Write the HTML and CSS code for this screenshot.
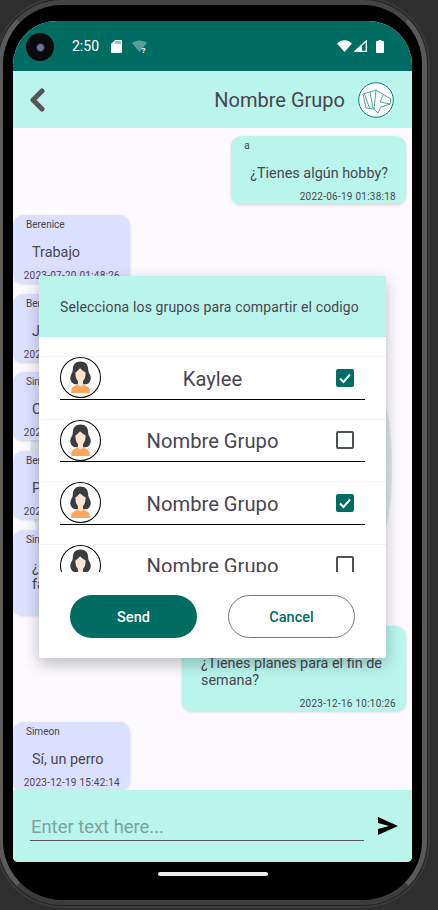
FILE: index.html
```html
<!DOCTYPE html>
<html>
<head>
  <title>Nombre Grupo</title>
  <link rel="stylesheet" href="styles.css">
</head>
<body>
  <svg class="defs" width="0" height="0">
    <symbol id="avatar" viewBox="0 0 40 40">
      <circle cx="20" cy="20" r="19.5" fill="#fff" stroke="#000" stroke-width="1"/>
      <path d="M11 35v-3c0-2 3-4 6-5h6c3 1 6 3 6 5v3z" fill="#fba65e"/>
      <path d="M20 4.500c-5 0-7.500 3-7.500 8 0 3-2.500 5-2.500 8s2.500 6 4.500 6h11c2 0 4.500-2.500 4.500-6s-2.500-5-2.500-8c0-5-2.500-8-7.500-8z" fill="#3b3b42"/>
      <path d="M15 15c2-1 3.500-3 4.500-4 2 2 3.500 3 5.500 4 0 5-1.500 9-5 9s-5-4-5-9z" fill="#fde4d0"/>
      <path d="M17.500 23h5v4l-2.500 2-2.500-2z" fill="#fde4d0"/>
    </symbol>
  </svg>

  <div class="phone">
    <div class="screen">
      <div class="status-bar">
        <div class="camera"><div class="lens"></div></div>
        <span class="time">2:50</span>
        <svg class="sd-icon" width="11" height="13" viewBox="0 0 11 13"><path d="M4 0h6a1 1 0 0 1 1 1v11a1 1 0 0 1-1 1H1a1 1 0 0 1-1-1V4z" fill="#fff"/><path d="M5 1v3M7 1v3M9 1v3" stroke="#006c62" stroke-width=".8"/></svg>
        <svg class="wifi-q" width="15" height="13" viewBox="0 0 15 13"><path d="M0 3c4-3.500 11-3.500 15 0l-7.500 9z" fill="#fff" opacity=".35"/><text x="9.500" y="13" class="wifi-q-mark">?</text></svg>
        <div class="status-right">
          <svg width="15" height="12" viewBox="0 0 15 12"><path d="M0 3.500c4-4.500 11-4.500 15 0l-7.500 8.500z" fill="#fff"/></svg>
          <svg width="13" height="12" viewBox="0 0 13 12"><path d="M12.300 1v10.300H1z" fill="none" stroke="#fff" stroke-width="1.300"/><path d="M8 11.500V5L1 11.500z" fill="#fff"/></svg>
          <svg class="battery" width="8" height="13" viewBox="0 0 8 13"><path d="M2.500 0h3v1H7a1 1 0 0 1 1 1v10a1 1 0 0 1-1 1H1a1 1 0 0 1-1-1V2a1 1 0 0 1 1-1h1.500z" fill="#fff"/></svg>
        </div>
      </div>

      <div class="app-header">
        <svg class="back" width="17" height="24" viewBox="0 0 17 24"><path d="M13 3 4 12l9 9" fill="none" stroke="#555" stroke-width="5" stroke-linecap="round" stroke-linejoin="round"/></svg>
        <span class="group-title">Nombre Grupo</span>
        <svg class="group-icon" width="36" height="36" viewBox="0 0 36 36">
          <circle cx="18" cy="18" r="17.300" fill="#fff" stroke="#0b7a70" stroke-width="1"/>
          <path d="M5 12 18 8l15 9-1 5-9 3-3 6-4-4-8-1zM6.500 12l5 14M18 8l-2 19M12 10l3 16M25 13l-3 7 10 2" fill="none" stroke="#2a8c82" stroke-width=".8"/>
        </svg>
      </div>

      <div class="messages">
        <div class="watermark"></div>

        <div class="bubble mine">
          <div class="sender">a</div>
          <div class="text">¿Tienes algún hobby?</div>
          <div class="date">2022-06-19 01:38:18</div>
        </div>
        <div class="bubble theirs">
          <div class="sender">Berenice</div>
          <div class="text">Trabajo</div>
          <div class="date">2023-07-20 01:48:26</div>
        </div>
        <div class="bubble theirs">
          <div class="sender">Berenice</div>
          <div class="text">Jugar</div>
          <div class="date">2023-07-20 01:50:11</div>
        </div>
        <div class="bubble theirs">
          <div class="sender">Simeon</div>
          <div class="text">Correr</div>
          <div class="date">2023-07-21 09:12:40</div>
        </div>
        <div class="bubble theirs">
          <div class="sender">Berenice</div>
          <div class="text">Pintar</div>
          <div class="date">2023-07-21 09:15:02</div>
        </div>
        <div class="bubble theirs wide">
          <div class="sender">Simeon</div>
          <div class="text">¿Tienes alguna mascota favorita?</div>
          <div class="date">2023-12-15 18:20:33</div>
        </div>
        <div class="bubble mine">
          <div class="text narrow">¿Tienes planes para el fin de semana?</div>
          <div class="date">2023-12-16 10:10:26</div>
        </div>
        <div class="bubble theirs">
          <div class="sender">Simeon</div>
          <div class="text">Sí, un perro</div>
          <div class="date">2023-12-19 15:42:14</div>
        </div>
      </div>

      <div class="composer">
        <div class="input">Enter text here...</div>
        <svg class="send-icon" width="20" height="18" viewBox="0 0 20 18"><path d="M0 0 20 9 0 18v-6l11-3L0 6z" fill="#000"/></svg>
      </div>

      <div class="dialog">
        <div class="dialog-title">Selecciona los grupos para compartir el codigo</div>
        <div class="group-list">
          <div class="group-row">
            <div class="group-inner">
              <svg class="avatar"><use href="#avatar"/></svg>
              <span class="group-name">Kaylee</span>
              <span class="check on"><svg width="14" height="14" viewBox="0 0 14 14"><path d="M2 7.500 5.500 11 12 3.500" fill="none" stroke="#fff" stroke-width="2"/></svg></span>
            </div>
          </div>
          <div class="group-row">
            <div class="group-inner">
              <svg class="avatar"><use href="#avatar"/></svg>
              <span class="group-name">Nombre Grupo</span>
              <span class="check"></span>
            </div>
          </div>
          <div class="group-row">
            <div class="group-inner">
              <svg class="avatar"><use href="#avatar"/></svg>
              <span class="group-name">Nombre Grupo</span>
              <span class="check on"><svg width="14" height="14" viewBox="0 0 14 14"><path d="M2 7.500 5.500 11 12 3.500" fill="none" stroke="#fff" stroke-width="2"/></svg></span>
            </div>
          </div>
          <div class="group-row">
            <div class="group-inner">
              <svg class="avatar"><use href="#avatar"/></svg>
              <span class="group-name">Nombre Grupo</span>
              <span class="check"></span>
            </div>
          </div>
        </div>
        <div class="dialog-actions">
          <button class="btn btn-send">Send</button>
          <button class="btn btn-cancel">Cancel</button>
        </div>
      </div>
    </div>
    <div class="home-bar"></div>
  </div>
</body>
</html>
```

FILE: styles.css
```css
html, body {
  height: 910px;
  overflow: hidden;
}

body {
  margin: 0;
  background-color: #2e2e2e;
  font-family: Roboto, "Liberation Sans", sans-serif;
  color: #49454f;
}

.defs {
  display: block;
  height: 0;
}

.phone {
  box-sizing: border-box;
  width: 429px;
  height: 905px;
  margin-left: -2px;
  padding: 16px 10px 0;
  background-color: #000;
  border: 5px solid #5a5a5a;
  border-top-color: #444;
  border-bottom-color: #3c3c3c;
  border-radius: 64px;
  box-shadow: 0 0 0 1px #222, 0 0 0 3px #3a3a3a;
}

.screen {
  position: relative;
  display: flex;
  flex-direction: column;
  height: 841px;
  overflow: hidden;
  background-color: #fcfaff;
  border-radius: 44px 44px 5px 5px;
}

/* status bar */
.status-bar {
  display: flex;
  align-items: center;
  flex: none;
  height: 50px;
  padding: 0 28px 0 13px;
  background-color: #006c62;
  color: #fff;
}

.camera {
  display: flex;
  align-items: center;
  justify-content: center;
  width: 28px;
  height: 28px;
  margin-top: 2px;
  background-color: #0a0a0e;
  border-radius: 50%;
}

.lens {
  width: 7px;
  height: 7px;
  background-color: #6f7595;
  border: 1px solid #23263a;
  border-radius: 50%;
}

.time {
  margin-left: 18px;
  font-size: 14px;
}

.sd-icon {
  margin-left: 12px;
}

.wifi-q {
  margin-left: 10px;
  overflow: visible;
}

.wifi-q-mark {
  font-size: 8px;
  font-weight: 700;
  fill: #fff;
}

.status-right {
  display: flex;
  align-items: center;
  gap: 2px;
  margin-left: auto;
}

.battery {
  margin-left: 7px;
}

/* header */
.app-header {
  display: flex;
  align-items: center;
  flex: none;
  height: 57px;
  padding: 0 18px 0 16px;
  background-color: #baf5ec;
}

.back {
  margin-right: auto;
}

.group-title {
  margin-right: 13px;
  font-size: 20px;
}

/* messages */
.messages {
  position: relative;
  display: flex;
  flex-direction: column;
  align-items: flex-start;
  flex: 1;
  gap: 10.8px;
  min-height: 0;
  padding-top: 8px;
  overflow: hidden;
}

.watermark {
  position: absolute;
  top: 266px;
  left: 17px;
  width: 362px;
  height: 146px;
  background-color: #dde7ea;
  border-radius: 14px / 70px;
}

.bubble {
  position: relative;
  flex: none;
  padding: 4px 0 1px;
  border-radius: 11px 11px 9px 9px;
  box-shadow: 0 1px 3px rgba(0, 0, 0, 0.16);
}

.mine {
  align-self: flex-end;
  margin-right: 6px;
  background-color: #baf5ec;
}

.theirs {
  width: 117px;
  background-color: #dce0ff;
}

.theirs.wide {
  width: 200px;
}

.sender {
  height: 12px;
  padding-left: 13px;
  font-size: 10px;
  line-height: 12px;
}

.text {
  margin: 13px 18px 9px 19px;
  font-size: 14.400px;
  line-height: 17px;
  white-space: nowrap;
}

.wide .text {
  width: 170px;
  white-space: normal;
}

.text.narrow {
  width: 187px;
  margin-top: 25px;
  white-space: normal;
}

.date {
  height: 12px;
  padding: 0 10px;
  font-size: 10px;
  line-height: 12px;
  letter-spacing: 0.25px;
  text-align: right;
  white-space: nowrap;
}

/* composer */
.composer {
  display: flex;
  align-items: center;
  flex: none;
  height: 72px;
  padding: 0 14px 0 17px;
  background-color: #baf5ec;
}

.input {
  box-sizing: border-box;
  width: 334px;
  height: 28px;
  margin-top: 1px;
  padding-left: 1px;
  border-bottom: 1px solid #555;
  color: #7fa39d;
  font-size: 18.400px;
  line-height: 28px;
}

.send-icon {
  margin-left: 14px;
}

/* dialog */
.dialog {
  position: absolute;
  top: 255px;
  left: 26px;
  display: flex;
  flex-direction: column;
  width: 347px;
  height: 382px;
  background-color: #fff;
  border-radius: 2px;
  box-shadow: 0 6px 16px rgba(0, 0, 0, 0.25);
}

.dialog-title {
  flex: none;
  height: 61px;
  padding-left: 21px;
  background-color: #baf5ec;
  font-size: 14px;
  line-height: 62px;
  letter-spacing: 0.14px;
  white-space: nowrap;
}

.group-list {
  flex: none;
  height: 235px;
  padding-top: 19px;
  box-sizing: border-box;
  overflow: hidden;
}

.group-row {
  box-sizing: border-box;
  height: 62.500px;
  border-top: 1px solid #f3f3f3;
}

.group-inner {
  display: flex;
  align-items: center;
  width: 305px;
  height: 42.500px;
  margin-left: 21px;
  box-sizing: border-box;
  border-bottom: 1.500px solid #000;
}

.avatar {
  flex: none;
  width: 41px;
  height: 41px;
}

.group-name {
  flex: 1;
  padding-top: 2px;
  font-size: 20.200px;
  text-align: center;
  white-space: nowrap;
}

.check {
  display: flex;
  align-items: center;
  justify-content: center;
  flex: none;
  box-sizing: border-box;
  width: 18px;
  height: 18px;
  margin: 0 11px 0 12px;
  border: 2px solid #49544f;
  border-radius: 2px;
}

.check.on {
  background-color: #006c62;
  border-color: #006c62;
}

.dialog-actions {
  display: flex;
  gap: 31px;
  padding: 23px 0 0 31px;
}

.btn {
  box-sizing: border-box;
  width: 127px;
  height: 43px;
  padding: 2px 0 0;
  border-radius: 22px;
  font-family: Roboto, "Liberation Sans", sans-serif;
  font-size: 14.500px;
  font-weight: 500;
  cursor: pointer;
}

.btn-send {
  background-color: #006c62;
  border: none;
  color: #fff;
}

.btn-cancel {
  background-color: #fff;
  border: 1px solid #79747e;
  color: #006c62;
}

.home-bar {
  width: 110px;
  height: 4px;
  margin: 10px auto 0;
  background-color: #eee;
  border-radius: 2px;
}
```
